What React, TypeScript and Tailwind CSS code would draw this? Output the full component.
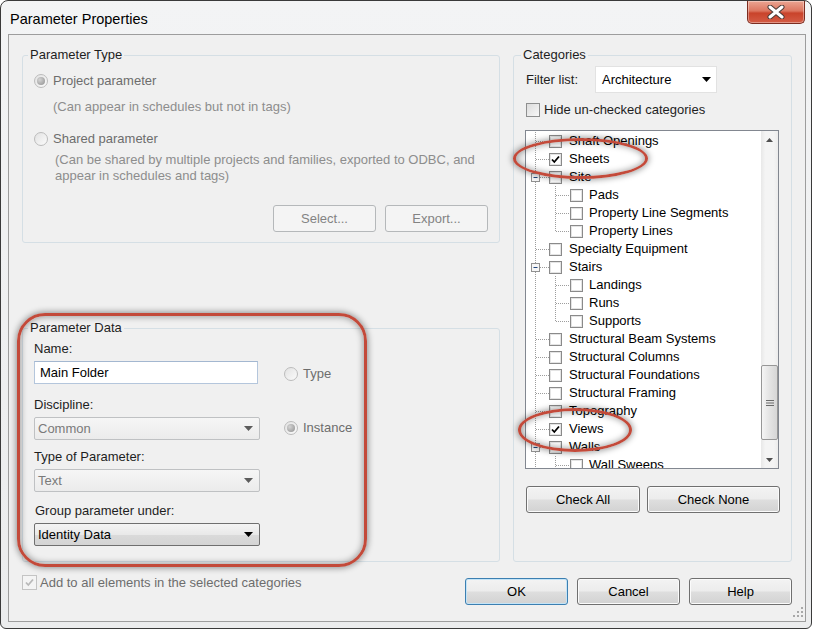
import React from "react";

type Row = { l: 0 | 1; t: string; c?: boolean; exp?: boolean; last?: boolean };

const rows: Row[] = [
  { l: 0, t: "Shaft Openings" },
  { l: 0, t: "Sheets", c: true },
  { l: 0, t: "Site", exp: true },
  { l: 1, t: "Pads" },
  { l: 1, t: "Property Line Segments" },
  { l: 1, t: "Property Lines", last: true },
  { l: 0, t: "Specialty Equipment" },
  { l: 0, t: "Stairs", exp: true },
  { l: 1, t: "Landings" },
  { l: 1, t: "Runs" },
  { l: 1, t: "Supports", last: true },
  { l: 0, t: "Structural Beam Systems" },
  { l: 0, t: "Structural Columns" },
  { l: 0, t: "Structural Foundations" },
  { l: 0, t: "Structural Framing" },
  { l: 0, t: "Topography" },
  { l: 0, t: "Views", c: true },
  { l: 0, t: "Walls", exp: true },
  { l: 1, t: "Wall Sweeps" },
];

function Arrow({ c = "#000" }: { c?: string }) {
  return (
    <svg width="9" height="5" viewBox="0 0 9 5" className="shrink-0">
      <path d="M0 0H9L4.5 5Z" fill={c} />
    </svg>
  );
}

function Radio({ checked }: { checked?: boolean }) {
  return (
    <span className="flex h-[14px] w-[14px] shrink-0 items-center justify-center rounded-full border border-[#bcbcbc] bg-[linear-gradient(135deg,#e2e2e2,#fbfbfb)]">
      {checked && (
        <span className="h-[8px] w-[8px] rounded-full bg-[radial-gradient(circle_at_35%_35%,#d4d4d4,#8f8f8f)]" />
      )}
    </span>
  );
}

function Check({ checked, disabled }: { checked?: boolean; disabled?: boolean }) {
  return (
    <span
      className={
        disabled
          ? "flex h-[15px] w-[15px] shrink-0 items-center justify-center border border-[#c4c4c4] bg-[#f4f4f4]"
          : "flex h-[14px] w-[14px] shrink-0 items-center justify-center border border-[#8e8f8f] bg-[linear-gradient(135deg,#dcdcdc,#f8f8f8)]"
      }
    >
      {checked && (
        <svg width="11" height="11" viewBox="0 0 11 11">
          <path d="M2 5.5L4.3 8L9 2.5" fill="none" stroke={disabled ? "#b9b9b9" : "#000"} strokeWidth="1.8" />
        </svg>
      )}
    </span>
  );
}

function TreeBox({ checked }: { checked?: boolean }) {
  return (
    <span className="flex h-[13px] w-[13px] shrink-0 items-center justify-center border border-[#8a8a8a] bg-white shadow-[inset_0_0_0_1px_#e4e4e4]">
      {checked && (
        <svg width="9" height="9" viewBox="0 0 9 9">
          <path d="M1 4.5L3.3 7L8 1.5" fill="none" stroke="#000" strokeWidth="1.8" />
        </svg>
      )}
    </span>
  );
}

function TreeRow({ r }: { r: Row }) {
  const w = r.l === 0 ? 23 : 44;
  const dot = { stroke: "#9d9d9d", strokeDasharray: "1 1" };
  return (
    <div className="flex h-[18px] shrink-0 items-center whitespace-nowrap">
      <svg width={w} height={18} className="shrink-0">
        <line x1="9.5" y1="0" x2="9.5" y2="18" {...dot} />
        {r.l === 0 ? (
          <line x1="10" y1="9.5" x2="23" y2="9.5" {...dot} />
        ) : (
          <>
            <line x1="29.5" y1="0" x2="29.5" y2={r.last ? 10 : 18} {...dot} />
            <line x1="30" y1="9.5" x2="44" y2="9.5" {...dot} />
          </>
        )}
        {r.exp && (
          <g>
            <rect x="5.5" y="5.5" width="8" height="8" fill="#f7f7f7" stroke="#919191" />
            <line x1="7.5" y1="9.5" x2="11.5" y2="9.5" stroke="#23487f" />
          </g>
        )}
      </svg>
      <TreeBox checked={r.c} />
      <span className={r.l === 0 ? "ml-[7px] leading-[18px] text-black" : "ml-[6px] leading-[18px] text-black"}>{r.t}</span>
    </div>
  );
}

function DBtn({ children }: { children: React.ReactNode }) {
  return (
    <div className="flex h-[27px] w-[103px] items-center justify-center rounded-[3px] border border-[#b5b8ba] bg-[#f4f4f4] pt-[1px] text-[#838383]">
      {children}
    </div>
  );
}

function Btn({ children, w, primary }: { children: React.ReactNode; w: string; primary?: boolean }) {
  return (
    <div
      className={
        (primary
          ? "border-[#3c7fb1] shadow-[inset_0_0_0_1px_#c4e4f7] "
          : "border-[#707070] shadow-[inset_0_0_0_1px_#fbfbfb] ") +
        w +
        " flex h-[27px] items-center justify-center rounded-[3px] border bg-[linear-gradient(180deg,#f3f3f3_0%,#ececec_48%,#dedede_52%,#d2d2d2_100%)] pt-[1px] text-black"
      }
    >
      {children}
    </div>
  );
}

function Legend({ children, wide }: { children: React.ReactNode; wide?: boolean }) {
  return (
    <legend className={wide ? "ml-[7px] px-[2px] leading-[16px] text-[#1e1e1e]" : "ml-[5px] px-[2px] leading-[16px] text-[#1e1e1e]"}>
      {children}
    </legend>
  );
}

export default function App() {
  return (
    <div className="relative h-[630px] w-[814px] bg-white font-['Liberation_Sans',Arial,sans-serif] text-[13px] text-[#1e1e1e]">
      <div className="flex h-[629px] w-[812px] flex-col rounded-t-[8px] rounded-b-[6px] border border-[#3a3a3a] bg-[linear-gradient(180deg,#f3f4f5_0%,#ebeced_100%)]">
        {/* Title bar */}
        <div className="flex h-[33px] shrink-0 items-start justify-between">
          <div className="pl-[9px] pt-[9px] text-[14.5px] leading-[18px] text-black">Parameter Properties</div>
          <div className="mr-[6px] flex h-[23px] w-[58px] items-center justify-center rounded-b-[5px] border border-t-0 border-[#7b2c20] bg-[linear-gradient(180deg,#eba592_0%,#dc7660_45%,#c9432b_55%,#d45c45_100%)] shadow-[inset_0_0_0_1px_rgba(255,255,255,0.35)]">
            <svg width="18" height="14" viewBox="0 0 18 14">
              <path d="M3 2L15 12M15 2L3 12" stroke="#4a3a36" strokeWidth="5" strokeLinecap="round" />
              <path d="M3 2L15 12M15 2L3 12" stroke="#ffffff" strokeWidth="3" strokeLinecap="round" />
            </svg>
          </div>
        </div>

        {/* Client area */}
        <div className="relative ml-[7px] h-[588px] w-[798px] border border-[#9d9d9d] bg-[#f0f0f0] px-[13px] pt-[12px]">
          <div className="flex gap-[13px]">
            {/* Left column */}
            <div className="w-[478px]">
              <fieldset className="rounded-[3px] border border-[#d5dfe5] p-0">
                <Legend>Parameter Type</Legend>
                <div className="px-[11px] pb-[10px]">
                  <div className="mt-[8px] flex h-[18px] items-center gap-[5px] pt-[1px] text-[#6d6d6d]">
                    <Radio checked />
                    Project parameter
                  </div>
                  <div className="mt-[10px] pl-[19px] leading-[16px] text-[#8d8d8d]">(Can appear in schedules but not in tags)</div>
                  <div className="mt-[14px] flex h-[18px] items-center gap-[5px] pt-[1px] text-[#6d6d6d]">
                    <Radio />
                    Shared parameter
                  </div>
                  <div className="mt-[5px] pl-[21px] leading-[16px] text-[#8d8d8d]">
                    (Can be shared by multiple projects and families, exported to ODBC, and
                    <br />
                    appear in schedules and tags)
                  </div>
                  <div className="mt-[21px] flex justify-end gap-[9px]">
                    <DBtn>Select...</DBtn>
                    <DBtn>Export...</DBtn>
                  </div>
                </div>
              </fieldset>

              <fieldset className="mt-[77px] rounded-[3px] border border-[#d5dfe5] p-0">
                <Legend>Parameter Data</Legend>
                <div className="flex px-[11px] pb-[15px]">
                  <div className="w-[226px]">
                    <div className="mt-[5px] leading-[16px]">Name:</div>
                    <div className="mt-[4px] flex h-[23px] w-[224px] items-center border border-[#b4c6dc] border-t-[#a3b7d0] bg-white pl-[5px] text-black">
                      Main Folder
                    </div>
                    <div className="mt-[13px] leading-[16px]">Discipline:</div>
                    <div className="mt-[4px] flex h-[23px] w-[226px] items-center justify-between rounded-[2px] border border-[#bfc1c3] bg-[linear-gradient(180deg,#f6f6f6,#ebebeb)] pl-[3px] pr-[6px] text-[#7a7a7a]">
                      Common
                      <Arrow c="#5c5c5c" />
                    </div>
                    <div className="mt-[9px] leading-[16px]">Type of Parameter:</div>
                    <div className="mt-[4px] flex h-[23px] w-[226px] items-center justify-between rounded-[2px] border border-[#bfc1c3] bg-[linear-gradient(180deg,#f6f6f6,#ebebeb)] pl-[3px] pr-[6px] text-[#7a7a7a]">
                      Text
                      <Arrow c="#5c5c5c" />
                    </div>
                    <div className="mt-[11px] pl-[1px] leading-[16px]">Group parameter under:</div>
                    <div className="mt-[4px] flex h-[23px] w-[226px] items-center justify-between rounded-[2px] border border-[#6f6f6f] bg-[linear-gradient(180deg,#f4f4f4_0%,#e9e9e9_50%,#dadada_52%,#d4d4d4_100%)] pl-[3px] pr-[6px] text-black">
                      Identity Data
                      <Arrow />
                    </div>
                  </div>
                  <div className="ml-[24px]">
                    <div className="mt-[28px] flex h-[18px] items-center gap-[5px] pt-[1px] text-[#6d6d6d]">
                      <Radio />
                      Type
                    </div>
                    <div className="mt-[36px] flex h-[18px] items-center gap-[5px] pt-[1px] text-[#6d6d6d]">
                      <Radio checked />
                      Instance
                    </div>
                  </div>
                </div>
              </fieldset>
            </div>

            {/* Right column */}
            <div className="w-[279px]">
              <fieldset className="rounded-[3px] border border-[#d5dfe5] p-0">
                <Legend wide>Categories</Legend>
                <div className="px-[11px] pb-[48px]">
                  <div className="mt-[3px] flex items-center">
                    <span className="w-[70px] pl-[1px]">Filter list:</span>
                    <div className="flex h-[27px] w-[122px] items-center justify-between border border-[#e2e2e2] bg-white pl-[6px] pr-[5px] text-black">
                      Architecture
                      <Arrow />
                    </div>
                  </div>
                  <div className="mt-[8px] flex h-[18px] items-center gap-[4px] pl-[1px]">
                    <Check />
                    Hide un-checked categories
                  </div>
                  <div className="mt-[11px] flex h-[339px] w-[254px] border border-[#828790] bg-white">
                    <div className="flex flex-1 flex-col overflow-hidden pt-[1px]">
                      {rows.map((r, i) => (
                        <TreeRow key={i} r={r} />
                      ))}
                    </div>
                    <div className="flex w-[17px] shrink-0 flex-col bg-[linear-gradient(90deg,#e8e8e8,#f4f4f4_25%,#f4f4f4_75%,#ececec)]">
                      <div className="flex h-[17px] items-center justify-center">
                        <svg width="7" height="4" viewBox="0 0 7 4">
                          <path d="M0 4L3.5 0L7 4Z" fill="#4f4f4f" />
                        </svg>
                      </div>
                      <div className="flex-1">
                        <div className="mt-[217px] flex h-[75px] items-center justify-center rounded-[2px] border border-[#979797] bg-[linear-gradient(90deg,#f5f5f5,#e4e4e4_50%,#d6d6d6)]">
                          <svg width="8" height="8" viewBox="0 0 8 8">
                            <path d="M0 1.5H8M0 4H8M0 6.5H8" stroke="#6a6a6a" strokeWidth="1" />
                          </svg>
                        </div>
                      </div>
                      <div className="flex h-[17px] items-center justify-center">
                        <svg width="7" height="4" viewBox="0 0 7 4">
                          <path d="M0 0L3.5 4L7 0Z" fill="#4f4f4f" />
                        </svg>
                      </div>
                    </div>
                  </div>
                  <div className="mt-[17px] flex gap-[7px] pl-[1px]">
                    <Btn w="w-[114px]">Check All</Btn>
                    <Btn w="w-[133px]">Check None</Btn>
                  </div>
                </div>
              </fieldset>
            </div>
          </div>

          {/* Bottom row */}
          <div className="flex items-start justify-between">
            <div className="mt-[13px] flex h-[15px] items-center gap-[3px] text-[#6d6d6d]">
              <Check checked disabled />
              Add to all elements in the selected categories
            </div>
            <div className="mt-[16px] flex gap-[9px]">
              <Btn w="w-[103px]" primary>
                OK
              </Btn>
              <Btn w="w-[103px]">Cancel</Btn>
              <Btn w="w-[103px]">Help</Btn>
            </div>
          </div>

          {/* Resize grip */}
          <svg width="11" height="11" viewBox="0 0 11 11" className="absolute bottom-[3px] right-[1px]">
            <g fill="#a8a8a8">
              <rect x="8" y="0" width="2" height="2" />
              <rect x="4" y="4" width="2" height="2" />
              <rect x="8" y="4" width="2" height="2" />
              <rect x="0" y="8" width="2" height="2" />
              <rect x="4" y="8" width="2" height="2" />
              <rect x="8" y="8" width="2" height="2" />
            </g>
          </svg>
        </div>
      </div>

      {/* Red annotation outlines */}
      <div className="pointer-events-none absolute left-[17px] top-[313px] h-[254px] w-[350px] rounded-[28px] border-[3px] border-[#c34a3a] shadow-[0_0_6px_1px_rgba(0,0,0,0.4),inset_0_0_6px_1px_rgba(0,0,0,0.35)]" />
      <div className="pointer-events-none absolute left-[513px] top-[138px] h-[41px] w-[135px] rounded-[50%] border-[3px] border-[#c34a3a] shadow-[0_0_6px_1px_rgba(0,0,0,0.4),inset_0_0_6px_1px_rgba(0,0,0,0.35)]" />
      <div className="pointer-events-none absolute left-[518px] top-[408px] h-[44px] w-[114px] rounded-[50%] border-[3px] border-[#c34a3a] shadow-[0_0_6px_1px_rgba(0,0,0,0.4),inset_0_0_6px_1px_rgba(0,0,0,0.35)]" />
    </div>
  );
}
